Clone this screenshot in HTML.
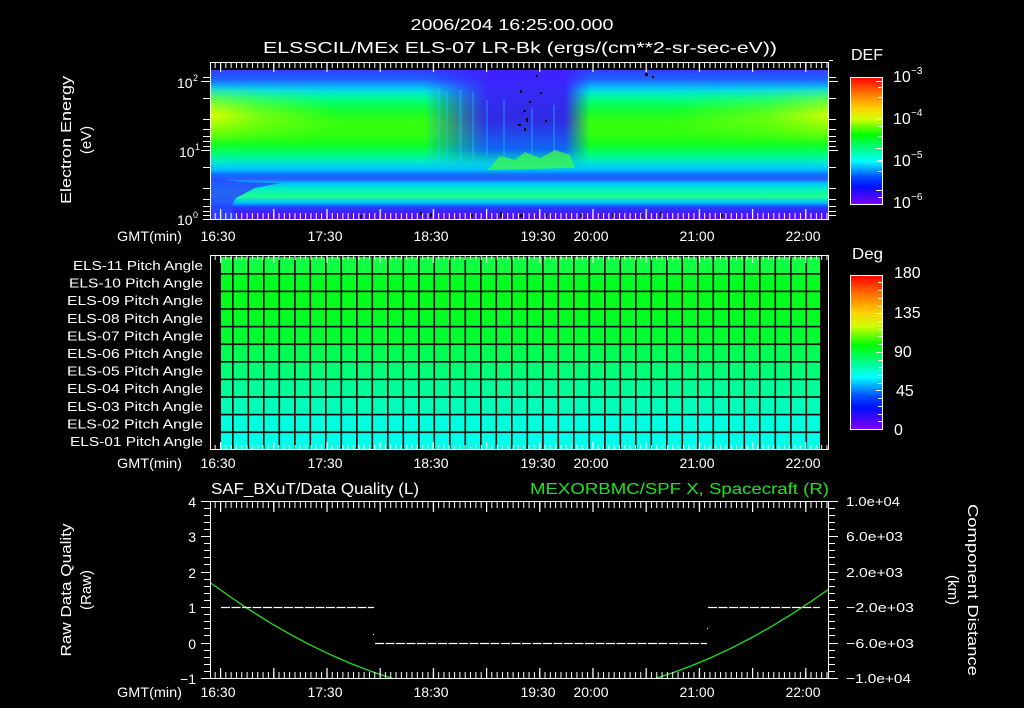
<!DOCTYPE html>
<html><head><meta charset="utf-8"><style>
html,body{margin:0;padding:0;background:#000;width:1024px;height:708px;overflow:hidden}
svg{display:block}
text{font-family:"Liberation Sans",sans-serif;fill:#fff}
</style></head><body>
<svg width="1024" height="708" viewBox="0 0 1024 708" xmlns="http://www.w3.org/2000/svg">
<defs>
<linearGradient id="spec" x1="0" y1="70" x2="0" y2="219" gradientUnits="userSpaceOnUse">
<stop offset="0" stop-color="#3040ff"/>
<stop offset="0.06" stop-color="#2060ff"/>
<stop offset="0.1" stop-color="#10a0ff"/>
<stop offset="0.14" stop-color="#00e0e0"/>
<stop offset="0.2" stop-color="#00ff80"/>
<stop offset="0.27" stop-color="#10ff30"/>
<stop offset="0.35" stop-color="#38ff10"/>
<stop offset="0.43" stop-color="#30ff10"/>
<stop offset="0.5" stop-color="#10ff20"/>
<stop offset="0.56" stop-color="#00ff70"/>
<stop offset="0.62" stop-color="#00e8d0"/>
<stop offset="0.67" stop-color="#00c0ff"/>
<stop offset="0.7" stop-color="#1070ff"/>
<stop offset="0.73" stop-color="#2858ff"/>
<stop offset="0.76" stop-color="#00c0ff"/>
<stop offset="0.8" stop-color="#00f0c0"/>
<stop offset="0.85" stop-color="#20ff90"/>
<stop offset="0.89" stop-color="#00c0ff"/>
<stop offset="0.92" stop-color="#2040ff"/>
<stop offset="0.96" stop-color="#4818ff"/>
<stop offset="1" stop-color="#6000ff"/>
</linearGradient>
<linearGradient id="yel" x1="0" y1="85" x2="0" y2="145" gradientUnits="userSpaceOnUse">
<stop offset="0" stop-color="#e0ff00" stop-opacity="0"/>
<stop offset="0.5" stop-color="#f0ff00" stop-opacity="0.9"/>
<stop offset="1" stop-color="#e0ff00" stop-opacity="0"/>
</linearGradient>
<linearGradient id="yelx" x1="211" y1="0" x2="828" y2="0" gradientUnits="userSpaceOnUse">
<stop offset="0" stop-color="#fff" stop-opacity="1"/>
<stop offset="0.08" stop-color="#fff" stop-opacity="0.45"/>
<stop offset="0.2" stop-color="#fff" stop-opacity="0"/>
<stop offset="0.75" stop-color="#fff" stop-opacity="0"/>
<stop offset="0.9" stop-color="#fff" stop-opacity="0.35"/>
<stop offset="1" stop-color="#fff" stop-opacity="0.9"/>
</linearGradient>
<mask id="yelmask"><rect x="211" y="70" width="617" height="150" fill="url(#yelx)"/></mask>
<linearGradient id="disx" x1="425" y1="0" x2="590" y2="0" gradientUnits="userSpaceOnUse">
<stop offset="0" stop-color="#fff" stop-opacity="0"/>
<stop offset="0.2" stop-color="#fff" stop-opacity="0.55"/>
<stop offset="0.38" stop-color="#fff" stop-opacity="0.95"/>
<stop offset="0.85" stop-color="#fff" stop-opacity="0.95"/>
<stop offset="1" stop-color="#fff" stop-opacity="0"/>
</linearGradient>
<mask id="dismask"><rect x="420" y="70" width="175" height="150" fill="url(#disx)"/></mask>
<linearGradient id="disv" x1="0" y1="70" x2="0" y2="170" gradientUnits="userSpaceOnUse">
<stop offset="0" stop-color="#4020ff"/>
<stop offset="0.5" stop-color="#3020f0"/>
<stop offset="0.8" stop-color="#1060ff"/>
<stop offset="1" stop-color="#10a0ff" stop-opacity="0"/>
</linearGradient>
<linearGradient id="bar" x1="0" y1="0" x2="0" y2="1">
<stop offset="0" stop-color="#ff0000"/>
<stop offset="0.12" stop-color="#ff7000"/>
<stop offset="0.24" stop-color="#ffd000"/>
<stop offset="0.33" stop-color="#d0ff00"/>
<stop offset="0.45" stop-color="#00ff00"/>
<stop offset="0.57" stop-color="#00ff90"/>
<stop offset="0.66" stop-color="#00ffff"/>
<stop offset="0.78" stop-color="#0050ff"/>
<stop offset="0.86" stop-color="#0010ff"/>
<stop offset="1" stop-color="#8000ff"/>
</linearGradient>
<pattern id="minT" x="220" y="0" width="5.32" height="708" patternUnits="userSpaceOnUse"><rect x="0" y="0" width="1" height="708" fill="#fff"/></pattern>
<pattern id="majT" x="220" y="0" width="53.2" height="708" patternUnits="userSpaceOnUse"><rect x="0" y="0" width="1.2" height="708" fill="#fff"/></pattern>
<pattern id="grid" x="232" y="273" width="15.5" height="17.6" patternUnits="userSpaceOnUse">
<rect x="0" y="0" width="15.5" height="1.6" fill="#000"/><rect x="0" y="0" width="1.6" height="17.6" fill="#000"/></pattern>
<clipPath id="bclip"><rect x="211" y="501" width="618" height="178"/></clipPath>
</defs>

<text x="512" y="30" font-size="16" text-anchor="middle" textLength="203" lengthAdjust="spacingAndGlyphs">2006/204 16:25:00.000</text>
<text x="263" y="53" font-size="16" textLength="514" lengthAdjust="spacingAndGlyphs">ELSSCIL/MEx ELS-07 LR-Bk  (ergs/(cm**2-sr-sec-eV))</text>

<rect x="211" y="70" width="617" height="149" fill="url(#spec)"/>
<rect x="211" y="85" width="617" height="60" fill="url(#yel)" mask="url(#yelmask)"/>
<path d="M211 178 L211 219 L240 219 L230 208 L236 198 L255 188 L280 183 L240 182Z" fill="#2848ff" opacity="0.85"/>
<rect x="420" y="70" width="175" height="100" fill="url(#disv)" mask="url(#dismask)"/>
<g fill="#20d0ff" opacity="0.3">
<rect x="430" y="90" width="2" height="70"/><rect x="437" y="88" width="3" height="75"/><rect x="446" y="92" width="2" height="66"/>
<rect x="459" y="90" width="3" height="70"/><rect x="472" y="92" width="2" height="68"/><rect x="486" y="100" width="2" height="58"/>
<rect x="503" y="100" width="2" height="58"/><rect x="531" y="108" width="2" height="48"/><rect x="553" y="105" width="2" height="50"/>
</g>
<g fill="#40ff40" opacity="0.7">
<path d="M488 170 L500 156 L515 160 L525 152 L540 158 L555 150 L570 155 L575 168 L488 170Z"/>
</g>
<g fill="#000">
<rect x="520" y="90" width="2" height="3"/><rect x="523" y="110" width="3" height="2"/><rect x="526" y="118" width="2" height="4"/>
<rect x="518" y="124" width="3" height="2"/><rect x="529" y="101" width="2" height="2"/><rect x="545" y="120" width="2" height="2"/>
<rect x="536" y="75" width="2" height="2"/><rect x="524" y="128" width="2" height="3"/><rect x="540" y="92" width="2" height="2"/>
<rect x="645" y="73" width="3" height="3"/><rect x="652" y="76" width="2" height="2"/>
<rect x="430" y="213" width="2" height="4"/><rect x="470" y="214" width="3" height="3"/><rect x="500" y="212" width="2" height="5"/>
<rect x="520" y="214" width="3" height="3"/><rect x="545" y="213" width="2" height="4"/><rect x="580" y="214" width="3" height="3"/>
<rect x="612" y="213" width="2" height="4"/><rect x="640" y="214" width="3" height="3"/><rect x="660" y="212" width="2" height="5"/>
<rect x="720" y="214" width="3" height="3"/><rect x="360" y="215" width="2" height="3"/><rect x="420" y="212" width="2" height="3"/>
</g>
<rect x="210.5" y="62.5" width="618" height="157" fill="none" stroke="#fff" stroke-width="1"/>
<rect x="211" y="63" width="617" height="5" fill="url(#minT)"/>
<rect x="211" y="63" width="617" height="9" fill="url(#majT)"/>
<rect x="211" y="213" width="617" height="6" fill="url(#minT)"/>
<rect x="211" y="209" width="617" height="10" fill="url(#majT)"/>
<g stroke="#fff" stroke-width="1">
<path d="M201 81.5h9M201 150.5h9M203 219.5h7M203 98.5h7M203 119.5h7M203 129.5h7M203 136.5h7M203 141.5h7M203 146.5h7M203 167.5h7M203 188.5h7M203 199.5h7M203 206.5h7M203 211.5h7M203 215.5h7M203 77.5h7"/>
<path d="M829 81.5h9M829 150.5h9M829 98.5h7M829 119.5h7M829 129.5h7M829 136.5h7M829 141.5h7M829 146.5h7M829 167.5h7M829 188.5h7M829 199.5h7M829 206.5h7M829 211.5h7M829 215.5h7M829 77.5h7M829 60.5h4"/>
</g>
<text x="177" y="88" font-size="14">10</text><text x="193" y="81" font-size="9">2</text>
<text x="179" y="157" font-size="14">10</text><text x="195" y="150" font-size="9">1</text>
<text x="177" y="225" font-size="14">10</text><text x="193" y="218" font-size="9">0</text>
<text transform="translate(71,140) rotate(-90)" font-size="15" text-anchor="middle" textLength="128" lengthAdjust="spacingAndGlyphs">Electron Energy</text>
<text transform="translate(91,140) rotate(-90)" font-size="15" text-anchor="middle">(eV)</text>
<g font-size="14">
<text x="117" y="241" textLength="65" lengthAdjust="spacingAndGlyphs">GMT(min)</text>
<text x="218" y="241" text-anchor="middle">16:30</text><text x="325" y="241" text-anchor="middle">17:30</text>
<text x="431" y="241" text-anchor="middle">18:30</text><text x="538" y="241" text-anchor="middle">19:30</text>
<text x="591" y="241" text-anchor="middle">20:00</text><text x="697" y="241" text-anchor="middle">21:00</text>
<text x="803" y="241" text-anchor="middle">22:00</text>
</g>
<text x="851" y="60" font-size="16" textLength="32" lengthAdjust="spacingAndGlyphs">DEF</text>
<rect x="850.5" y="77.5" width="32" height="127" fill="url(#bar)" stroke="#fff"/>
<g stroke="#fff"><path d="M876 81.5h6M878 87.5h4M878 97.5h4M876 119.5h6M878 126.5h4M878 136.5h4M876 148.5h6M878 160.5h4M876 161.5h6M878 171.5h4M876 190.5h6M878 197.5h4"/></g>
<g font-size="16">
<text x="893" y="82">10</text><text x="911" y="74" font-size="10">−3</text>
<text x="893" y="124">10</text><text x="911" y="116" font-size="10">−4</text>
<text x="893" y="166">10</text><text x="911" y="158" font-size="10">−5</text>
<text x="893" y="208">10</text><text x="911" y="200" font-size="10">−6</text>
</g>

<rect x="221" y="256" width="599" height="17.6" fill="#10ff40"/>
<rect x="221" y="273.6" width="599" height="17.6" fill="#00ff20"/>
<rect x="221" y="291.2" width="599" height="17.6" fill="#00ff1a"/>
<rect x="221" y="308.8" width="599" height="17.6" fill="#00ff22"/>
<rect x="221" y="326.4" width="599" height="17.6" fill="#00ff30"/>
<rect x="221" y="344" width="599" height="17.6" fill="#00ff55"/>
<rect x="221" y="361.6" width="599" height="17.6" fill="#00ff78"/>
<rect x="221" y="379.2" width="599" height="17.6" fill="#00ff98"/>
<rect x="221" y="396.8" width="599" height="17.6" fill="#00ffbb"/>
<rect x="221" y="414.4" width="599" height="17.6" fill="#00ffdd"/>
<rect x="221" y="432" width="599" height="17" fill="#00ffe8"/>
<rect x="221" y="256" width="599" height="193" fill="url(#grid)"/>
<rect x="210.5" y="255.5" width="618" height="194" fill="none" stroke="#fff"/>
<rect x="211" y="256" width="617" height="4" fill="url(#minT)"/>
<rect x="211" y="256" width="617" height="7" fill="url(#majT)"/>
<rect x="211" y="445" width="617" height="4" fill="url(#minT)"/>
<rect x="211" y="442" width="617" height="7" fill="url(#majT)"/>
<g font-size="13" text-anchor="end">
<text x="203" y="270" textLength="130" lengthAdjust="spacingAndGlyphs">ELS-11 Pitch Angle</text>
<text x="203" y="287.6" textLength="134" lengthAdjust="spacingAndGlyphs">ELS-10 Pitch Angle</text>
<text x="203" y="305.2" textLength="136" lengthAdjust="spacingAndGlyphs">ELS-09 Pitch Angle</text>
<text x="203" y="322.8" textLength="136" lengthAdjust="spacingAndGlyphs">ELS-08 Pitch Angle</text>
<text x="203" y="340.4" textLength="136" lengthAdjust="spacingAndGlyphs">ELS-07 Pitch Angle</text>
<text x="203" y="358" textLength="136" lengthAdjust="spacingAndGlyphs">ELS-06 Pitch Angle</text>
<text x="203" y="375.6" textLength="136" lengthAdjust="spacingAndGlyphs">ELS-05 Pitch Angle</text>
<text x="203" y="393.2" textLength="136" lengthAdjust="spacingAndGlyphs">ELS-04 Pitch Angle</text>
<text x="203" y="410.8" textLength="136" lengthAdjust="spacingAndGlyphs">ELS-03 Pitch Angle</text>
<text x="203" y="428.4" textLength="136" lengthAdjust="spacingAndGlyphs">ELS-02 Pitch Angle</text>
<text x="203" y="446" textLength="133" lengthAdjust="spacingAndGlyphs">ELS-01 Pitch Angle</text>
</g>
<g font-size="14">
<text x="117" y="468" textLength="65" lengthAdjust="spacingAndGlyphs">GMT(min)</text>
<text x="218" y="468" text-anchor="middle">16:30</text><text x="325" y="468" text-anchor="middle">17:30</text>
<text x="431" y="468" text-anchor="middle">18:30</text><text x="538" y="468" text-anchor="middle">19:30</text>
<text x="591" y="468" text-anchor="middle">20:00</text><text x="697" y="468" text-anchor="middle">21:00</text>
<text x="803" y="468" text-anchor="middle">22:00</text>
</g>
<text x="852" y="259" font-size="16" textLength="31" lengthAdjust="spacingAndGlyphs">Deg</text>
<rect x="850.5" y="275.5" width="32" height="154" fill="url(#bar)" stroke="#fff"/>
<g stroke="#fff"><path d="M878 282.5h4M878 290.5h4M878 298.5h4M878 306.5h4M876 313.5h6M878 321.5h4M878 329.5h4M878 336.5h4M878 344.5h4M876 352.5h6M878 360.5h4M878 367.5h4M878 375.5h4M878 383.5h4M876 390.5h6M878 398.5h4M878 406.5h4M878 414.5h4M878 421.5h4"/></g>
<g font-size="16">
<text x="894" y="278">180</text><text x="894" y="318">135</text><text x="894" y="357">90</text>
<text x="896" y="396">45</text><text x="894" y="435">0</text>
</g>

<text x="211" y="494" font-size="16" textLength="208" lengthAdjust="spacingAndGlyphs">SAF_BXuT/Data Quality (L)</text>
<text x="829" y="494" font-size="16" text-anchor="end" style="fill:#20e020" textLength="299" lengthAdjust="spacingAndGlyphs">MEXORBMC/SPF X, Spacecraft (R)</text>
<g clip-path="url(#bclip)">
<path fill="none" stroke="#20e020" stroke-width="1.3" d="M211 583.1 L231 597.4 L251 610.8 L271 623.3 L291 634.8 L311 645.3 L331 654.9 L351 663.6 L371 671.3 L391 678.1 L411 683.9 L431 688.8 L451 692.7 L471 695.7 L491 697.7 L511 698.8 L531 698.9 L551 698.1 L571 696.4 L591 693.7 L611 690.1 L631 685.5 L651 679.9 L671 673.4 L691 666 L711 657.6 L731 648.3 L751 638 L771 626.8 L791 614.6 L811 601.5 L829 589"/>
</g>
<g stroke="#fff" stroke-width="1.2" stroke-dasharray="9 1.5" fill="none">
<path d="M221 607.5H374"/><path d="M375 643.5H707"/><path d="M708 607.5H820"/>
</g>
<rect x="373" y="634" width="1" height="1" fill="#fff"/><rect x="707" y="628" width="1" height="1" fill="#fff"/>
<rect x="210.5" y="501.5" width="618" height="177" fill="none" stroke="#fff"/>
<rect x="211" y="502" width="617" height="6" fill="url(#minT)"/>
<rect x="211" y="502" width="617" height="10" fill="url(#majT)"/>
<rect x="211" y="672" width="617" height="6" fill="url(#minT)"/>
<rect x="211" y="668" width="617" height="10" fill="url(#majT)"/>
<g stroke="#fff">
<path d="M201 501.5h9M201 536.5h9M201 572.5h9M201 607.5h9M201 643.5h9M201 678.5h9"/>
<path d="M204 508.5h6M204 515.5h6M204 522.5h6M204 529.5h6M204 543.5h6M204 550.5h6M204 557.5h6M204 564.5h6M204 579.5h6M204 586.5h6M204 593.5h6M204 600.5h6M204 614.5h6M204 621.5h6M204 628.5h6M204 635.5h6M204 650.5h6M204 657.5h6M204 664.5h6M204 671.5h6"/>
<path d="M829 501.5h9M829 536.5h9M829 572.5h9M829 607.5h9M829 643.5h9M829 678.5h9"/>
<path d="M829 508.5h6M829 515.5h6M829 522.5h6M829 529.5h6M829 543.5h6M829 550.5h6M829 557.5h6M829 564.5h6M829 579.5h6M829 586.5h6M829 593.5h6M829 600.5h6M829 614.5h6M829 621.5h6M829 628.5h6M829 635.5h6M829 650.5h6M829 657.5h6M829 664.5h6M829 671.5h6"/>
</g>
<g font-size="14" text-anchor="end">
<text x="196" y="507">4</text><text x="196" y="542">3</text><text x="196" y="578">2</text>
<text x="196" y="613">1</text><text x="196" y="649">0</text><text x="196" y="684">−1</text>
</g>
<g font-size="13">
<text x="846" y="506" textLength="54" lengthAdjust="spacingAndGlyphs">1.0e+04</text>
<text x="846" y="541" textLength="57" lengthAdjust="spacingAndGlyphs">6.0e+03</text>
<text x="846" y="577" textLength="57" lengthAdjust="spacingAndGlyphs">2.0e+03</text>
<text x="846" y="612" textLength="68" lengthAdjust="spacingAndGlyphs">−2.0e+03</text>
<text x="846" y="648" textLength="68" lengthAdjust="spacingAndGlyphs">−6.0e+03</text>
<text x="846" y="683" textLength="65" lengthAdjust="spacingAndGlyphs">−1.0e+04</text>
</g>
<text transform="translate(71,590) rotate(-90)" font-size="15" text-anchor="middle" textLength="133" lengthAdjust="spacingAndGlyphs">Raw Data Quality</text>
<text transform="translate(91,590) rotate(-90)" font-size="15" text-anchor="middle">(Raw)</text>
<text transform="translate(968,590) rotate(90)" font-size="15" text-anchor="middle" textLength="172" lengthAdjust="spacingAndGlyphs">Component Distance</text>
<text transform="translate(948,590) rotate(90)" font-size="15" text-anchor="middle">(km)</text>
<g font-size="14">
<text x="117" y="697" textLength="65" lengthAdjust="spacingAndGlyphs">GMT(min)</text>
<text x="218" y="697" text-anchor="middle">16:30</text><text x="325" y="697" text-anchor="middle">17:30</text>
<text x="431" y="697" text-anchor="middle">18:30</text><text x="538" y="697" text-anchor="middle">19:30</text>
<text x="591" y="697" text-anchor="middle">20:00</text><text x="697" y="697" text-anchor="middle">21:00</text>
<text x="803" y="697" text-anchor="middle">22:00</text>
</g>
</svg>
</body></html>
